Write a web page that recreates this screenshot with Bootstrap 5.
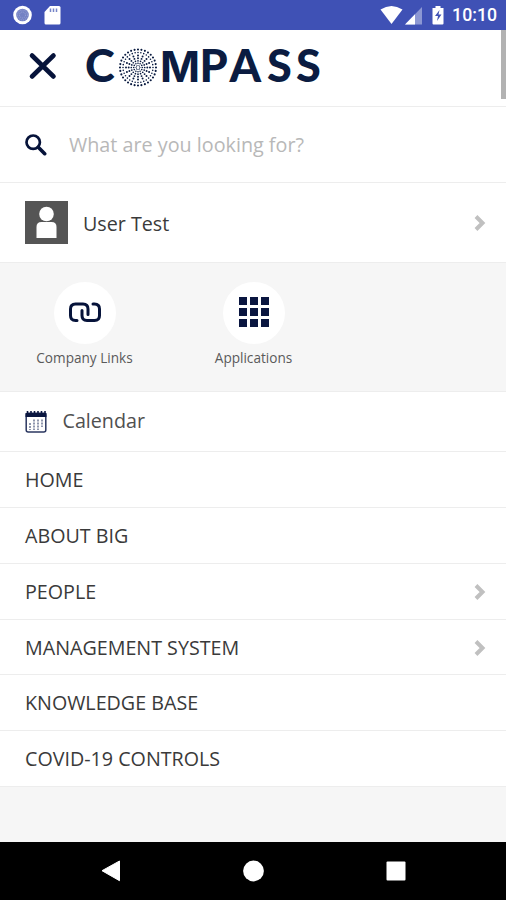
<!DOCTYPE html>
<html lang="en">
<head>
<meta charset="utf-8">
<meta name="viewport" content="width=device-width, initial-scale=1">
<title>Compass</title>
<link href="https://cdn.jsdelivr.net/npm/bootstrap@5.3.0/dist/css/bootstrap.min.css" rel="stylesheet">
<style>
  :root { --navy: #06133a; --line: #ededed; --panel: #f6f6f6; }
  body { font-family: "Open Sans", "Noto Sans", sans-serif; font-size: 19.7px; line-height: 26px; color: #3a3a3a; height: 900px; overflow: hidden; background: var(--panel); }
  svg { display: block; flex: none; }
  .statusbar { height: 30px; background: #3f51b5; padding: 0 9px 0 13px; }
  .clock { font: 500 17.7px/32px Roboto, sans-serif; margin-left: 8px; }
  .line-b { border-bottom: 1px solid var(--line); }
  .masthead { height: 77px; padding-left: 28px; }
  .scroll-thumb { top: 30px; right: 0; width: 5px; height: 69px; background: #b2b2b2; }
  .search-row { height: 76px; padding-left: 25px; }
  .search-row input { font-size: 19.75px; padding: 0; margin-left: 22px; }
  .search-row input::placeholder { color: #b8b8b8; opacity: 1; }
  .user-row { height: 80px; padding: 0 19px 0 25px; }
  .user-name { margin: 2px 0 0 15px; }
  .tiles { height: 129px; background: var(--panel); padding-top: 19px; }
  .tile { width: 169px; font-size: 13.6px; line-height: 20px; color: #5a5a5a; }
  .disc { width: 62px; height: 62px; background: #fff; margin-bottom: 4px; }
  .menu-row { height: 55.87px; padding: 1.2px 19px 0 25px; background: #fff; }
  .menu-row.calendar { height: 60px; padding-top: 0; color: #505050; }
  .calendar-label { margin: 0 0 2px 15.5px; }
  .softkeys { height: 58px; background: #000; }
</style>
</head>
<body class="d-flex flex-column position-relative">
  <div class="statusbar d-flex align-items-center text-white">
    <svg width="50" height="30" viewBox="0 0 50 30">
      <circle cx="9.500" cy="15" r="9.300" fill="#fff"/>
      <circle cx="9.500" cy="15" r="6.300" fill="#7482c4"/>
      <g fill="none" stroke="#a9b2dc" stroke-width=".7" stroke-dasharray="1 1"><circle cx="9.500" cy="15" r="5"/><circle cx="9.500" cy="15" r="3"/></g>
      <path d="M37 6h9q1.500 0 1.500 1.500v15.500q0 1.500-1.500 1.500H33q-1.500 0-1.500-1.500V12z" fill="#fff"/>
      <path d="M37.500 8.500v3.500m3-3.500v3.500m3-3.500v3.500" stroke="#7684c8" stroke-width="1.500"/>
    </svg>
    <svg class="ms-auto" width="65" height="30" viewBox="379.500 0 65 30">
      <path d="M381 9.500Q392 2.500 403 9.500L392 24z" fill="#fff"/>
      <path d="M422.500 7v17.500h-17z" fill="#8c97d3"/>
      <path d="M415.500 14.200v10.300h-10z" fill="#fff"/>
      <path d="M436 6h5v2h3v15.500q0 1-1 1h-9q-1 0-1-1V8h3z" fill="#fff"/>
      <path d="M440 10l-4.500 6h3l-1 5 4.500-6.500h-3z" fill="#3f51b5"/>
    </svg>
    <span class="clock">10:10</span>
  </div>
  <div class="scroll-thumb position-absolute"></div>

  <header class="masthead bg-white line-b d-flex align-items-center">
    <svg width="300" height="60" viewBox="28 38 300 60" role="img" aria-label="Compass">
      <path d="M32 55.500L53.500 76.500M53.500 55.500L32 76.500" stroke="#06133a" stroke-width="4.600" stroke-linecap="round"/>
      <text y="82" font-family="Lato, sans-serif" font-weight="900" font-size="45" fill="#0b1c41"><tspan x="85">C</tspan><tspan x="160" font-family="Inter, sans-serif" font-weight="700" font-size="43">M</tspan><tspan x="199.500 229.500 267 296">PASS</tspan></text>
      <g fill="none" stroke="#0b1c41" stroke-linecap="round" transform="translate(138 67.500)">
        <circle r="18" pathLength="32" stroke-dasharray="0 1" stroke-width="2.100"/>
        <circle r="15" pathLength="32" stroke-dasharray="0 1" stroke-width="1.600"/>
        <circle r="12" pathLength="16" stroke-dasharray="0 1" stroke-width="2"/>
        <circle r="9.300" pathLength="16" stroke-dasharray="0 1" stroke-width="1.900"/>
        <circle r="6.700" pathLength="16" stroke-dasharray="0 1" stroke-width="1.700"/>
        <circle r="4.300" pathLength="12" stroke-dasharray="0 1" stroke-width="1.600"/>
        <circle r="2" pathLength="8" stroke-dasharray="0 1" stroke-width="1.200"/>
      </g>
    </svg>
  </header>

  <div class="search-row bg-white line-b d-flex align-items-center">
    <svg width="22" height="22" viewBox="0 0 22 22" fill="none" stroke="#06133a">
      <circle cx="8.200" cy="8.200" r="6.700" stroke-width="2.700"/>
      <path d="M13.300 13.300L19.700 19.700" stroke-width="3.600" stroke-linecap="round"/>
    </svg>
    <input class="form-control border-0 shadow-none bg-transparent" type="text" placeholder="What are you looking for?">
  </div>

  <div class="user-row bg-white line-b d-flex align-items-center">
    <svg width="43" height="43" viewBox="0 0 43 43">
      <path fill="#555" d="M0 0h43v43H0z"/>
      <circle cx="21.500" cy="13" r="7.300" fill="#fff"/>
      <path d="M11.500 37V26q0-5 5-5h10q5 0 5 5v11z" fill="#fff"/>
    </svg>
    <span class="user-name">User Test</span>
    <svg class="ms-auto" width="14" height="20" viewBox="0 0 14 20"><path d="M3 3.500L9.500 10 3 16.500" fill="none" stroke="#c0c0c0" stroke-width="4"/></svg>
  </div>

  <div class="tiles line-b d-flex text-center">
    <div class="tile d-flex flex-column align-items-center">
      <span class="disc rounded-circle d-flex align-items-center justify-content-center">
        <svg width="34" height="22" viewBox="0 0 34 22" fill="none" stroke="#06133a" stroke-width="3" stroke-linecap="round">
          <path d="M9 18.500H7.500q-5 0-5-5V7q0-5 5-5H15q5 0 5 5v5.500"/>
          <path d="M25 2h1.500q5 0 5 5v6.500q0 5-5 5H19q-5 0-5-5V8.500"/>
        </svg>
      </span>
      Company Links
    </div>
    <div class="tile d-flex flex-column align-items-center">
      <span class="disc rounded-circle d-flex align-items-center justify-content-center">
        <svg width="30" height="32" viewBox="0 0 30 32" fill="#0a1640">
          <path d="M0 0h8v8H0zM11 0h8v8h-8zM22 0h8v8h-8zM0 11h8v8H0zM11 11h8v8h-8zM22 11h8v8h-8zM0 22h8v8H0zM11 22h8v8h-8zM22 22h8v8h-8z"/>
        </svg>
      </span>
      Applications
    </div>
  </div>

  <nav>
    <div class="menu-row calendar line-b d-flex align-items-center">
      <svg width="22" height="22" viewBox="0 0 22 22">
        <rect x="1.200" y="2.200" width="19.600" height="18.800" rx="2" fill="#fff" stroke="#2b3760" stroke-width="1.500"/>
        <path d="M.5 2h21v4H.5z" fill="#0a1640"/>
        <path d="M2.500 0v2M6 0v2M9.500 0v2M13 0v2M16.500 0v2M20 0v2" stroke="#0a1640" stroke-width="1.600"/>
        <path d="M9 8.500V19M13 8.500V19M17 8.500V16M5 12v7" stroke="#6a7493" stroke-width="1.500" stroke-dasharray="2 1"/>
      </svg>
      <span class="calendar-label">Calendar</span>
    </div>
    <div class="menu-row line-b d-flex align-items-center">HOME</div>
    <div class="menu-row line-b d-flex align-items-center">ABOUT BIG</div>
    <div class="menu-row line-b d-flex align-items-center">PEOPLE
      <svg class="ms-auto" width="14" height="20" viewBox="0 0 14 20"><path d="M3 3.500L9.500 10 3 16.500" fill="none" stroke="#c0c0c0" stroke-width="4"/></svg>
    </div>
    <div class="menu-row line-b d-flex align-items-center">MANAGEMENT SYSTEM
      <svg class="ms-auto" width="14" height="20" viewBox="0 0 14 20"><path d="M3 3.500L9.500 10 3 16.500" fill="none" stroke="#c0c0c0" stroke-width="4"/></svg>
    </div>
    <div class="menu-row line-b d-flex align-items-center">KNOWLEDGE BASE</div>
    <div class="menu-row line-b d-flex align-items-center">COVID-19 CONTROLS</div>
  </nav>

  <div class="softkeys mt-auto">
    <svg width="506" height="58" viewBox="0 842 506 58" fill="#fff">
      <path d="M102 870.700L119.500 861v19.700z" stroke="#fff" stroke-linejoin="round"/>
      <circle cx="253.500" cy="871" r="10.400"/>
      <rect x="386.500" y="861.500" width="19" height="19" rx="1"/>
    </svg>
  </div>
<script src="https://cdn.jsdelivr.net/npm/bootstrap@5.3.0/dist/js/bootstrap.bundle.min.js"></script>
</body>
</html>
